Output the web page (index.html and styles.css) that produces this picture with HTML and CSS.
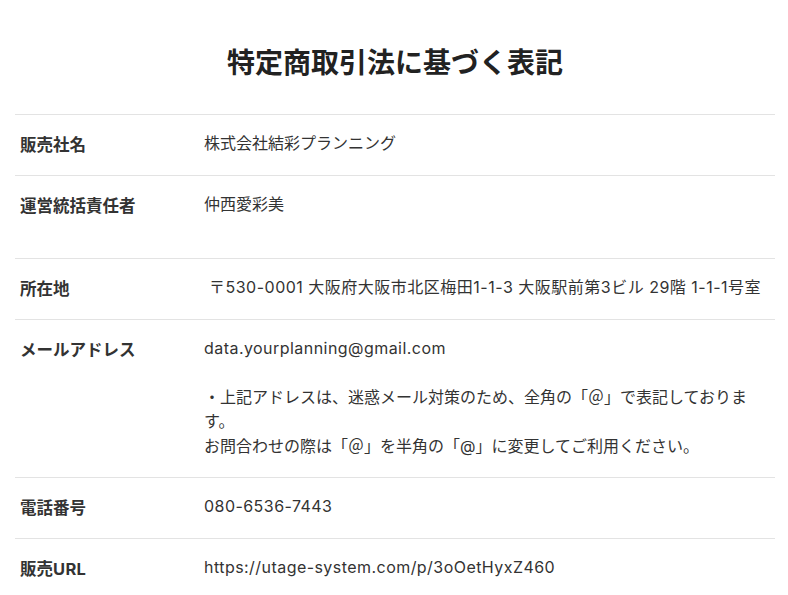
FILE: index.html
```html
<!DOCTYPE html>
<html lang="ja">
<head>
<meta charset="utf-8">
<title>特定商取引法に基づく表記</title>
<link rel="stylesheet" href="styles.css">
</head>
<body>
<main class="page">
  <h1 class="title">特定商取引法に基づく表記</h1>
  <div class="table">
    <div class="row">
      <div class="label">販売社名</div>
      <div class="value">株式会社結彩プランニング</div>
    </div>
    <div class="row">
      <div class="label">運営統括責任者</div>
      <div class="value">仲西愛彩美<br><span class="blank"></span></div>
    </div>
    <div class="row">
      <div class="label">所在地</div>
      <div class="value nowrap wide">&nbsp;〒530-0001 大阪府大阪市北区梅田1-1-3 大阪駅前第3ビル 29階 1-1-1号室</div>
    </div>
    <div class="row">
      <div class="label">メールアドレス</div>
      <div class="value"><span class="latin">data.yourplanning@gmail.com</span><br><br>・上記アドレスは、迷惑メール対策のため、全角の「＠」で表記しております。<br>お問合わせの際は「＠」を半角の「@」に変更してご利用ください。</div>
    </div>
    <div class="row">
      <div class="label">電話番号</div>
      <div class="value"><span class="latin">080-6536-7443</span></div>
    </div>
    <div class="row">
      <div class="label">販売<span class="latin-b">URL</span></div>
      <div class="value"><span class="latin">https://utage-system.com/p/3oOetHyxZ460</span></div>
    </div>
  </div>
</main>
</body>
</html>
```

FILE: styles.css
```css
html, body {
  margin: 0;
  padding: 0;
  background: #ffffff;
}
body {
  font-family: Inter, "Noto Sans CJK JP", sans-serif;
  color: #333333;
}
.page {
  padding: 0 13px 0 15px;
}
.title {
  margin: 40px 0 32px;
  font-size: 28px;
  line-height: 42px;
  font-weight: 700;
  text-align: center;
  color: #222222;
  font-family: "Noto Sans CJK JP", sans-serif;
}
.table {
  display: flex;
  flex-direction: column;
}
.row {
  display: grid;
  grid-template-columns: 189px 1fr;
  align-items: start;
  border-top: 1px solid #e3e3e3;
  padding: 16px 0 19px;
}
.row:last-child {
  border-bottom: 1px solid #e3e3e3;
}
.label {
  padding: 3px 0 0 5px;
  font-size: 16.5px;
  line-height: 21.5px;
  font-weight: 700;
  color: #333333;
  font-family: "Noto Sans CJK JP", sans-serif;
}
.latin-b {
  font-family: Inter, sans-serif;
  letter-spacing: 0.3px;
}
.value {
  padding-right: 20px;
  font-size: 16px;
  line-height: 24.5px;
  color: #333333;
}
.blank {
  display: block;
  height: 23px;
}
.latin {
  letter-spacing: 0.45px;
}
.wide {
  letter-spacing: 0.5px;
}
.nowrap {
  white-space: nowrap;
}
```
